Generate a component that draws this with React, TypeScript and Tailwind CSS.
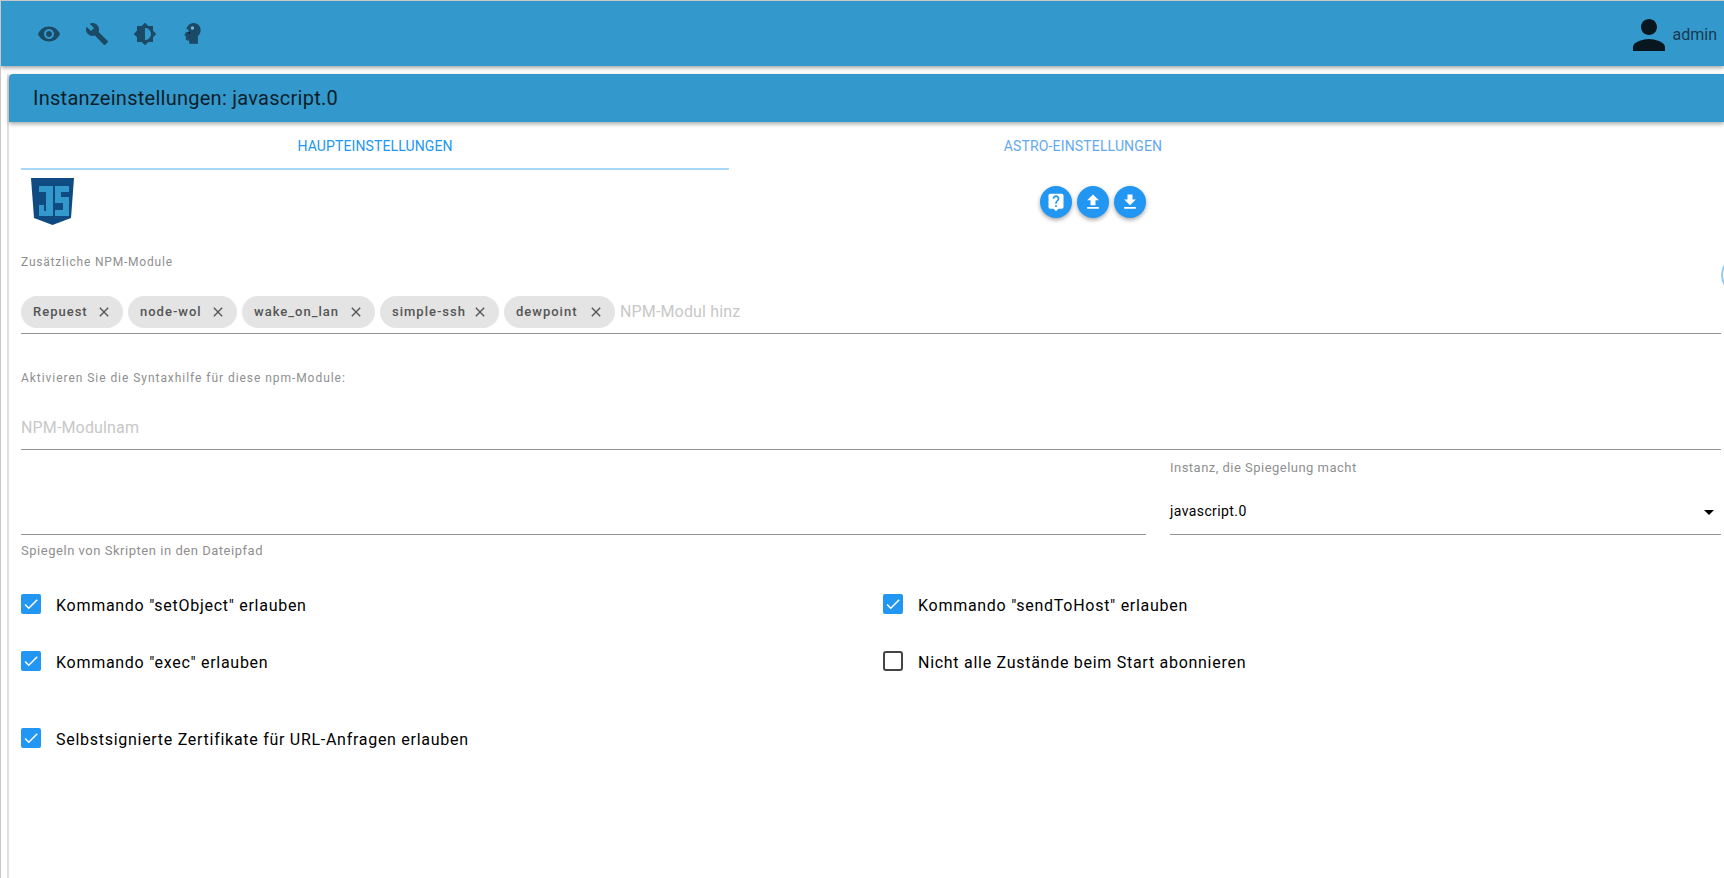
import type { FC, ReactNode } from "react"
import { MdVisibility, MdBuild, MdBrightness6, MdPerson, MdClose, MdFileUpload, MdFileDownload, MdLiveHelp, MdArrowDropDown, MdCheck } from "react-icons/md"

const Chip: FC<{ label: string; width: string }> = ({ label, width }) => (
  <div className={`flex h-8 items-center justify-between rounded-full bg-[#e4e4e4] pl-3 pr-[11px] ${width}`}>
    <span className="text-[13px] font-medium tracking-[1px] text-[#555]">{label}</span>
    <MdClose className="text-[16px] text-[#555]" />
  </div>
)

const Check: FC<{ label: string; checked?: boolean; className?: string }> = ({ label, checked = true, className }) => (
  <div className={`flex h-5 items-center ${className ?? ""}`}>
    {checked ? (
      <div className="flex h-5 w-5 items-center justify-center rounded-[2px] bg-[#2196f3]">
        <MdCheck className="text-[18px] text-white" />
      </div>
    ) : (
      <div className="h-5 w-5 rounded-[3px] border-2 border-[#444]" />
    )}
    <span className="mt-1 ml-[15px] text-base tracking-[0.72px] text-black">{label}</span>
  </div>
)

const Fab: FC<{ children: ReactNode }> = ({ children }) => (
  <div className="flex h-8 w-8 items-center justify-center rounded-full bg-[#2196f3] text-[20px] text-white shadow-[0_2px_4px_rgba(0,0,0,0.35)]">
    {children}
  </div>
)

// Kopf im Profil mit Brille, gibt es so in keinem Icon-Paket
const HeadIcon = () => (
  <svg viewBox="2 1.5 22 22" className="h-6 w-6" fill="currentColor">
    <path d="M13.5 2.5c3.8 0 6.5 2.9 6.5 6.6 0 2.4-1 4-2.5 5.4v7h-8v-3H8c-1 0-1.6-.7-1.6-1.6V14H5l1.4-3.2c.2-4.6 3-8.3 7.1-8.3z" />
    <circle cx="12.5" cy="7" r="1.5" fill="#7fb6d6" />
    <circle cx="7.5" cy="9.5" r="1.5" fill="#3399cc" />
    <circle cx="9.5" cy="11.5" r="0.8" fill="#0b2230" />
  </svg>
)

export default function App() {
  return (
    <div className="relative flex h-[878px] w-[1724px] flex-col overflow-hidden border-t border-l border-[#c8c8c8] bg-white [font-family:Roboto,sans-serif]">
      <header className="flex h-[65px] shrink-0 items-center justify-between bg-[#3399cc] pr-[7px] pl-[36px] shadow-[0_2px_4px_rgba(0,0,0,0.35)]">
        <div className="flex items-center gap-[24px] text-[24px] text-[#1a4a66]">
          <MdVisibility />
          <MdBuild />
          <MdBrightness6 />
          <HeadIcon />
        </div>
        <div className="mt-[3px] flex items-center">
          <MdPerson className="text-[48px] text-[#07161f]" />
          <span className="text-base text-[#173a50]">admin</span>
        </div>
      </header>

      <main className="mt-2 ml-[6px] flex-1 border-l-2 border-[#e0e0e0]">
        <div className="flex h-12 items-center rounded-tl-[4px] bg-[#3399cc] pl-[24px] shadow-[0_2px_4px_rgba(0,0,0,0.35)]">
          <h1 className="text-[20px] font-normal tracking-[0.26px] text-[#0c1e2a]">Instanzeinstellungen: javascript.0</h1>
        </div>

        <div className="pl-[12px] pr-[3px]">
          <div className="flex h-[48px]">
            <div className="flex w-[708px] items-center justify-center border-b-2 border-[#a8d8f8] pt-px text-sm uppercase tracking-[0.12px] text-[#2196f3]">
              Haupteinstellungen
            </div>
            <div className="flex w-[708px] items-center justify-center pb-px text-sm uppercase tracking-[0.15px] text-[#64a9f0]">
              Astro-Einstellungen
            </div>
          </div>

          <div className="flex h-[79px]">
            <svg viewBox="0 0 43 47" className="mt-[8px] ml-[10px] h-[47px] w-[43px]">
              <path d="M0 0h43l-3 40-18.5 7-18.5-7z" fill="#0f4a80" />
              <path d="M8 8h14v30H8V27h5v6h2V14H8z M24 8h14v6h-8v5h8v19H24v-6h8v-7h-8z" fill="#3399cc" />
            </svg>
            <div className="mt-[16px] ml-[966px] flex gap-[5px]">
              <Fab><MdLiveHelp /></Fab>
              <Fab><MdFileUpload /></Fab>
              <Fab><MdFileDownload /></Fab>
            </div>
          </div>

          <label className="mt-[5px] block text-xs tracking-[0.8px] text-[#8f8f8f]">Zusätzliche NPM-Module</label>
          <div className="mt-[26px] flex h-[38px] gap-[5px] border-b border-[#949494]">
            <Chip label="Repuest" width="w-[102px]" />
            <Chip label="node-wol" width="w-[109px]" />
            <Chip label="wake_on_lan" width="w-[133px]" />
            <Chip label="simple-ssh" width="w-[119px]" />
            <Chip label="dewpoint" width="w-[111px]" />
            <span className="flex h-8 items-center text-base tracking-[0.15px] text-[#c8c8c8]">NPM-Modul hinz</span>
          </div>

          <label className="mt-[36px] block text-xs tracking-[0.95px] text-[#8f8f8f]">Aktivieren Sie die Syntaxhilfe für diese npm-Module:</label>
          <div className="mt-[30px] flex h-[34px] items-start border-b border-[#949494] text-base tracking-[0.15px] text-[#c8c8c8]">
            NPM-Modulnam
          </div>

          <div className="mt-[8px] flex gap-6">
            <div className="w-[1125px]">
              <div className="h-[77px] border-b border-[#949494]" />
              <p className="mt-[6px] text-[13px] leading-5 tracking-[0.53px] text-[#8f8f8f]">Spiegeln von Skripten in den Dateipfad</p>
            </div>
            <div className="flex-1">
              <label className="block text-[13px] leading-5 tracking-[0.48px] text-[#8f8f8f]">Instanz, die Spiegelung macht</label>
              <div className="mt-[23px] flex h-[34px] items-start justify-between border-b border-[#949494] text-sm tracking-[0.4px] text-black">
                <span>javascript.0</span>
                <MdArrowDropDown className="-mt-[1px] text-[24px]" />
              </div>
            </div>
          </div>

          <div className="mt-[33px] grid grid-cols-[862px_1fr] gap-y-[37px]">
            <Check label={'Kommando "setObject" erlauben'} />
            <Check label={'Kommando "sendToHost" erlauben'} />
            <Check label={'Kommando "exec" erlauben'} />
            <Check label="Nicht alle Zustände beim Start abonnieren" checked={false} />
            <Check label="Selbstsignierte Zertifikate für URL-Anfragen erlauben" className="mt-[20px]" />
          </div>
        </div>
      </main>

      <div className="absolute top-[254px] left-[1720px] h-10 w-10 rounded-full border-2 border-[#90caf9]" />
    </div>
  )
}
